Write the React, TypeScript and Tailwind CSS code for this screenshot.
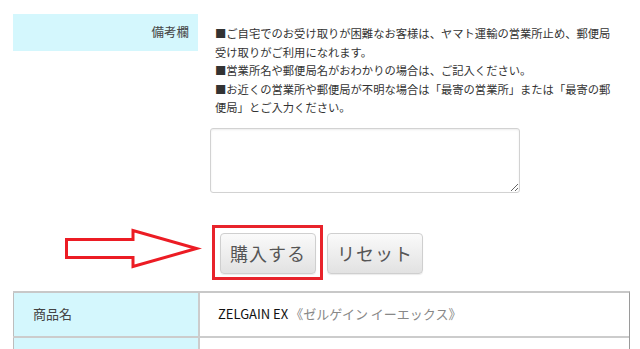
import React from 'react';

const font = { fontFamily: '"Noto Sans CJK JP", "Noto Sans", sans-serif' };

const Arrow = () => (
  <svg width="140" height="55" viewBox="0 0 140 55" className="shrink-0">
    <polygon
      points="4.5,14.5 71,14.5 71,5.5 134.5,23.5 71,41.5 71,32.5 4.5,32.5"
      fill="none"
      stroke="#ec1c24"
      strokeWidth="3"
      strokeLinejoin="miter"
    />
  </svg>
);

const GrayButton = ({ label }: { label: string }) => (
  <button
    type="button"
    className="w-[96px] h-[41px] rounded-[4px] border border-[#cfcfcf] bg-gradient-to-b from-[#fafafa] to-[#e2e2e2] text-[18px] text-[#555] tracking-[1px] leading-none shadow-[0_1px_1px_rgba(0,0,0,0.08)]"
  >
    {label}
  </button>
);

const notes = [
  '■ご自宅でのお受け取りが困難なお客様は、ヤマト運輸の営業所止め、郵便局',
  '受け取りがご利用になれます。',
  '■営業所名や郵便局名がおわかりの場合は、ご記入ください。',
  '■お近くの営業所や郵便局が不明な場合は「最寄の営業所」または「最寄の郵',
  '便局」とご入力ください。',
];

export default function App() {
  return (
    <div className="w-[640px] h-[349px] overflow-hidden bg-white text-[#333]" style={font}>
      <div className="flex pt-[14px]">
        <div className="ml-[13px] w-[185px] h-[37px] bg-[#d4f7fd] flex items-center justify-end pr-[9px] text-[12.5px] text-[#444]">
          備考欄
        </div>
        <div className="ml-[12px]">
          <div className="pl-[5px] pt-[10px] text-[11.3px] leading-[18.5px] text-[#333] whitespace-nowrap">
            {notes.map((line) => (
              <div key={line}>{line}</div>
            ))}
          </div>
          <textarea
            className="block mt-[11px] w-[310px] h-[65px] rounded-[3px] border border-[#d2d2d2] shadow-[inset_0_1px_2px_rgba(0,0,0,0.08)] outline-none resize"
            defaultValue=""
          />
        </div>
      </div>

      <div className="flex items-start mt-[32px]">
        <div className="ml-[62px]">
          <Arrow />
        </div>
        <div className="ml-[10px] w-[111px] h-[55px] border-[3px] border-[#e8232b] pl-[5px] pt-[5px]">
          <GrayButton label="購入する" />
        </div>
        <div className="ml-[4px] pt-[8px]">
          <GrayButton label="リセット" />
        </div>
      </div>

      <div className="mt-[11px] ml-[13px] w-[617px] border-t-2 border-[#c8c8c8] border-r border-r-[#9a9a9a]">
        <div className="flex h-[45px] border-b-2 border-[#cccccc]">
          <div className="w-[185px] bg-[#d4f7fd] border-l border-[#bdbdbd] flex items-center pl-[19px] text-[13px] text-[#444]">
            商品名
          </div>
          <div className="w-[2px] bg-[#cccccc]" />
          <div className="flex-1 flex items-center pl-[18px] text-[13px]">
            <span className="text-[#111]">ZELGAIN EX</span>
            <span className="ml-[2px] text-[#888]">《ゼルゲイン イーエックス》</span>
          </div>
        </div>
        <div className="flex h-[20px]">
          <div className="w-[185px] bg-[#d4f7fd] border-l border-[#bdbdbd]" />
          <div className="w-[2px] bg-[#cccccc]" />
          <div className="flex-1" />
        </div>
      </div>
    </div>
  );
}
